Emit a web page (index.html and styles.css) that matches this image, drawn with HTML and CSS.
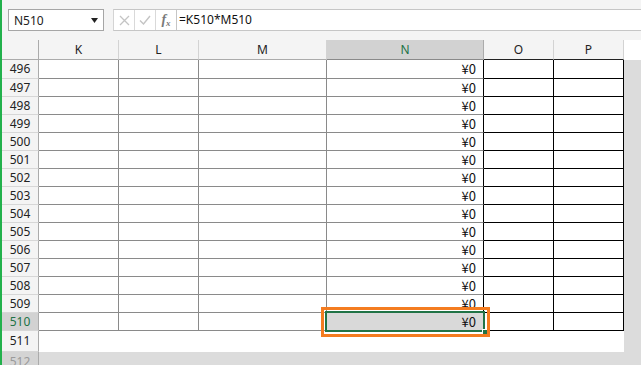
FILE: index.html
```html
<!DOCTYPE html>
<html>
<head>
<meta charset="utf-8">
<link rel="stylesheet" href="styles.css">
</head>
<body>
<div class="app">
  <div class="toolbar">
    <div class="namebox">
      <span class="name">N510</span>
      <svg class="caret" width="7" height="5" viewBox="0 0 7 5"><polygon points="0,0 7,0 3.5,5" fill="#222"/></svg>
    </div>
    <div class="fbar">
      <div class="fbtn"><svg width="11" height="11" viewBox="0 0 11 11"><path d="M1 1L10 10M10 1L1 10" stroke="#c4c4c4" stroke-width="1.3" fill="none"/></svg></div>
      <div class="fbtn"><svg width="12" height="10" viewBox="0 0 12 10"><path d="M1 5.5L4.5 9L11 1" stroke="#c4c4c4" stroke-width="1.4" fill="none"/></svg></div>
      <div class="fbtn fx"><span class="fx-f">f</span><span class="fx-x">x</span></div>
      <div class="finput">=K510*M510</div>
    </div>
  </div>
  <div class="sheet">
    <div class="c rh corner"></div>
    <div class="c ch">K</div>
    <div class="c ch">L</div>
    <div class="c ch">M</div>
    <div class="c ch sel">N</div>
    <div class="c ch blk">O</div>
    <div class="c ch blk">P</div>
    <div class="c ch end"></div>

    <div class="c rh first">496</div><div class="c g first"></div><div class="c g first"></div><div class="c g first"></div><div class="c n first">¥0</div><div class="c b first"></div><div class="c b first"></div><div class="c gr first"></div>
    <div class="c rh">497</div><div class="c g"></div><div class="c g"></div><div class="c g"></div><div class="c n">¥0</div><div class="c b"></div><div class="c b"></div><div class="c gr"></div>
    <div class="c rh">498</div><div class="c g"></div><div class="c g"></div><div class="c g"></div><div class="c n">¥0</div><div class="c b"></div><div class="c b"></div><div class="c gr"></div>
    <div class="c rh">499</div><div class="c g"></div><div class="c g"></div><div class="c g"></div><div class="c n">¥0</div><div class="c b"></div><div class="c b"></div><div class="c gr"></div>
    <div class="c rh">500</div><div class="c g"></div><div class="c g"></div><div class="c g"></div><div class="c n">¥0</div><div class="c b"></div><div class="c b"></div><div class="c gr"></div>
    <div class="c rh">501</div><div class="c g"></div><div class="c g"></div><div class="c g"></div><div class="c n">¥0</div><div class="c b"></div><div class="c b"></div><div class="c gr"></div>
    <div class="c rh">502</div><div class="c g"></div><div class="c g"></div><div class="c g"></div><div class="c n">¥0</div><div class="c b"></div><div class="c b"></div><div class="c gr"></div>
    <div class="c rh">503</div><div class="c g"></div><div class="c g"></div><div class="c g"></div><div class="c n">¥0</div><div class="c b"></div><div class="c b"></div><div class="c gr"></div>
    <div class="c rh">504</div><div class="c g"></div><div class="c g"></div><div class="c g"></div><div class="c n">¥0</div><div class="c b"></div><div class="c b"></div><div class="c gr"></div>
    <div class="c rh">505</div><div class="c g"></div><div class="c g"></div><div class="c g"></div><div class="c n">¥0</div><div class="c b"></div><div class="c b"></div><div class="c gr"></div>
    <div class="c rh">506</div><div class="c g"></div><div class="c g"></div><div class="c g"></div><div class="c n">¥0</div><div class="c b"></div><div class="c b"></div><div class="c gr"></div>
    <div class="c rh">507</div><div class="c g"></div><div class="c g"></div><div class="c g"></div><div class="c n">¥0</div><div class="c b"></div><div class="c b"></div><div class="c gr"></div>
    <div class="c rh">508</div><div class="c g"></div><div class="c g"></div><div class="c g"></div><div class="c n">¥0</div><div class="c b"></div><div class="c b"></div><div class="c gr"></div>
    <div class="c rh">509</div><div class="c g"></div><div class="c g"></div><div class="c g"></div><div class="c n">¥0</div><div class="c b"></div><div class="c b"></div><div class="c gr"></div>
    <div class="c rh selrow">510</div><div class="c g"></div><div class="c g"></div><div class="c g"></div>
    <div class="c n active">¥0<span class="selbox"></span><span class="handle"></span><span class="mark"></span></div>
    <div class="c b"></div><div class="c b"></div><div class="c gr"></div>

    <div class="c rh tall">511</div><div class="c blank span6"></div><div class="c gr tall"></div>
    <div class="c rh dim">512</div><div class="c dimarea span7"></div>
  </div>
</div>
</body>
</html>
```
FILE: styles.css
```css
* { box-sizing: border-box; }
html, body { margin: 0; padding: 0; }
body {
  width: 641px;
  height: 365px;
  overflow: hidden;
  background: #f3f3f3;
  font-family: "Noto Sans", "Liberation Sans", sans-serif;
}
.app {
  border-left: 2px solid #22b14c;
  height: 365px;
}
.toolbar {
  height: 40px;
  padding: 9px 0 0 6px;
  display: flex;
  align-items: flex-start;
  background: #f4f4f4;
}
.namebox {
  width: 96px;
  height: 22px;
  background: #fff;
  border: 1px solid #a6a6a6;
  display: flex;
  align-items: center;
  justify-content: space-between;
  padding: 0 5px 0 5px;
  font-size: 12px;
  color: #222;
}
.caret { margin-top: 1px; }
.fbar {
  margin-left: 9px;
  flex: 1;
  height: 22px;
  display: flex;
  border-top: 1px solid #c6c6c6;
  border-bottom: 1px solid #c6c6c6;
  border-left: 1px solid #d4d4d4;
  background: #fff;
}
.fbtn {
  width: 21px;
  height: 20px;
  border-right: 1px solid #d9d9d9;
  display: flex;
  align-items: center;
  justify-content: center;
  background: #fff;
}
.fx {
  font-family: "Liberation Serif", serif;
  font-style: italic;
  font-weight: bold;
  color: #7a7a7a;
  font-size: 14px;
  border-right: 1px solid #c6c6c6;
}
.fx-x { font-size: 9px; margin-top: 5px; margin-left: 0; }
.finput {
  flex: 1;
  padding-left: 2px;
  font-size: 12px;
  line-height: 20px;
  color: #111;
}
.sheet {
  display: grid;
  grid-template-columns: 37px 80px 80px 128px 157px 70px 70px 17px;
  grid-template-rows: 20px 19px repeat(14, 18px) 21px 20px;
  background: #fff;
}
.c {
  border-right: 1px solid transparent;
  border-bottom: 1px solid transparent;
}
.rh {
  background: #f4f4f4;
  border-right-color: #ababab;
  border-bottom-color: #d7d7d7;
  font-size: 12px;
  color: #222;
  text-align: center;
  line-height: 17px;
}
.rh.first { line-height: 18px; }
.corner { border-bottom-color: #ababab; }
.ch {
  background: #f4f4f4;
  border-right-color: #d3d3d3;
  border-bottom-color: #ababab;
  font-size: 12px;
  color: #222;
  text-align: center;
  line-height: 19px;
}
.ch.sel {
  background: #d2d2d2;
  color: #217346;
  border-right-color: #ababab;
  border-bottom-color: #8a8a8a;
}
.ch.blk { border-bottom-color: #222; }
.ch.end { background: #fff; border: none; }
.g { border-right-color: #8a8a8a; border-bottom-color: #8a8a8a; }
.n {
  border-right-color: #000;
  border-bottom-color: #8a8a8a;
  text-align: right;
  padding-right: 7px;
  font-family: "Noto Sans CJK JP", "DejaVu Sans", sans-serif;
  font-size: 13px;
  line-height: 17px;
  color: #111;
}
.n.first { line-height: 18px; }
.b { border-right-color: #000; border-bottom-color: #000; }
.gr { background: #dcdcdc; border: none; }
.selrow { background: #d2d2d2; color: #217346; }
.active { position: relative; background: #d9d9d9; }
.selbox {
  position: absolute;
  left: -2px; right: -2px; top: -2px; bottom: -2px;
  border: 2px solid #217346;
}
.handle {
  position: absolute;
  right: -5px; bottom: -5px;
  width: 6px; height: 6px;
  background: #217346;
  border: 1px solid #fff;
}
.mark {
  position: absolute;
  left: -6px; right: -7px; top: -6px; bottom: -7px;
  border: 3px solid #f47c20;
}
.tall { line-height: 20px; border-bottom: none; }
.rh.tall { border-bottom: 1px solid #d7d7d7; }
.blank { background: #fff; border: none; }
.span6 { grid-column: span 6; }
.span7 { grid-column: span 7; }
.dim { background: #d4d4d4; color: #9a9a9a; line-height: 20px; border-bottom: none; }
.dimarea { background: #dcdcdc; border: none; }
```
